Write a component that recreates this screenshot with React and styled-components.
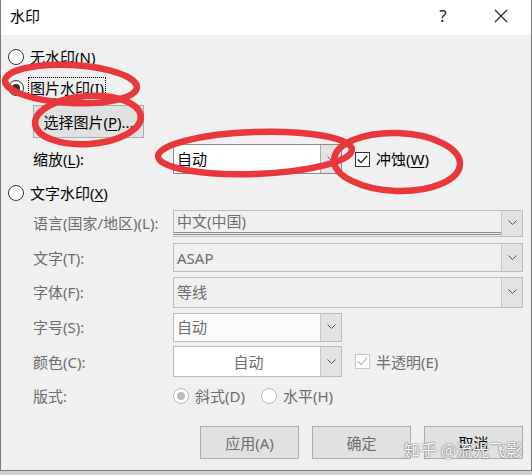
import React from "react";
import styled, { createGlobalStyle } from "styled-components";

const GlobalStyle = createGlobalStyle`
  html, body {
    margin: 0;
    padding: 0;
  }
  body {
    width: 532px;
    height: 475px;
    overflow: hidden;
    background: #d0d0d0;
    font-family: "Noto Sans", "Noto Sans CJK SC", sans-serif;
  }
`;

const Screen = styled.div`
  position: relative;
  width: 532px;
  height: 475px;
`;

const Dialog = styled.div`
  box-sizing: border-box;
  width: 532px;
  height: 471px;
  border: 1px solid #7a7a7a;
  border-top: none;
  background: #f0f0f0;
  display: flex;
  flex-direction: column;
  font-size: 15px;
  line-height: 20px;
  color: #000;
`;

const TitleBar = styled.div`
  height: 35px;
  background: #fff;
  display: flex;
  align-items: center;
  padding: 0 0 3px 9px;
  box-sizing: border-box;
`;

const Title = styled.span`
  flex: 1;
`;

const Help = styled.span`
  width: 14px;
  text-align: center;
  font-size: 17px;
  color: #222;
  margin-right: 44px;
`;

const CloseBox = styled.span`
  display: flex;
  margin-right: 23px;
`;

const Body = styled.div`
  flex: 1;
  padding: 12px 8px 0 7px;
  display: flex;
  flex-direction: column;
`;

const RadioRow = styled.div`
  display: flex;
  align-items: center;
  height: 20px;
  gap: 6px;
  margin-top: ${(p) => p.$mt || 0}px;
  margin-left: ${(p) => p.$ml || 0}px;
  color: ${(p) => (p.$disabled ? "#6d6d6d" : "#000")};
`;

const Radio = styled.span`
  position: relative;
  box-sizing: border-box;
  width: 16px;
  height: 16px;
  border-radius: 50%;
  border: 1px solid ${(p) => (p.$disabled ? "#bcbcbc" : "#333")};
  background: #fff;
  flex: none;
  &::after {
    content: "";
    display: ${(p) => (p.$checked ? "block" : "none")};
    position: absolute;
    left: 3px;
    top: 3px;
    width: 8px;
    height: 8px;
    border-radius: 50%;
    background: ${(p) => (p.$disabled ? "#bcbcbc" : "#333")};
  }
`;

const Focus = styled.span`
  border: 1px dotted #000;
  padding: 0 1px;
  margin-left: -2px;
`;

const U = styled.span`
  text-decoration: underline;
  text-underline-offset: 2px;
`;

const PushButton = styled.div`
  box-sizing: border-box;
  width: ${(p) => p.$w}px;
  height: 33px;
  display: flex;
  align-items: center;
  justify-content: center;
  border: 1px solid #adadad;
  background: #e1e1e1;
  color: ${(p) => (p.$dim ? "#6d6d6d" : "#000")};
  margin-top: ${(p) => p.$mt || 0}px;
  margin-left: ${(p) => p.$ml || 0}px;
`;

const FieldRow = styled.div`
  display: flex;
  align-items: center;
  margin-top: ${(p) => p.$mt || 0}px;
  margin-left: 25px;
`;

const Label = styled.span`
  width: 140px;
  flex: none;
  color: ${(p) => (p.$disabled ? "#6d6d6d" : "#000")};
`;

const FormGrid = styled.div`
  display: grid;
  grid-template-columns: 140px 1fr;
  grid-template-rows: repeat(6, 34.6px);
  align-items: center;
  margin: 3px 0 0 25px;
`;

const Combo = styled.div`
  box-sizing: border-box;
  width: ${(p) => (p.$wide ? 350 : 169)}px;
  height: ${(p) => p.$h || 28}px;
  display: flex;
  border: 1px solid ${(p) => (p.$active ? "#8a8a8a" : "#bcbcbc")};
  background: ${(p) => p.$bg || "#f0f0f0"};
`;

const ComboText = styled.div`
  flex: 1;
  display: flex;
  align-items: center;
  justify-content: ${(p) => (p.$center ? "center" : "flex-start")};
  padding-left: 3px;
  color: ${(p) => (p.$disabled ? "#6d6d6d" : "#000")};
  border-bottom: ${(p) => (p.$double ? "3px double #8c8c8c" : "none")};
  margin-bottom: ${(p) => (p.$double ? "1px" : "0")};
`;

const ComboArrow = styled.div`
  width: 20px;
  flex: none;
  display: flex;
  align-items: center;
  justify-content: center;
  background: #e3e3e3;
  border-left: 1px solid ${(p) => (p.$active ? "#adadad" : "#c8c8c8")};
`;

const Check = styled.span`
  box-sizing: border-box;
  width: 15px;
  height: 15px;
  flex: none;
  display: flex;
  align-items: center;
  justify-content: center;
  border: 1px solid ${(p) => (p.$disabled ? "#c6c6c6" : "#333")};
  background: #fff;
`;

const CheckRow = styled.div`
  display: flex;
  align-items: center;
  gap: 6px;
  margin-left: 13px;
  color: ${(p) => (p.$disabled ? "#6d6d6d" : "#000")};
`;

const Control = styled.div`
  display: flex;
  align-items: center;
`;

const StyleChoices = styled.div`
  display: flex;
  align-items: center;
  gap: 6px;
  color: #6d6d6d;
`;

const ButtonRow = styled.div`
  display: flex;
  justify-content: flex-end;
  gap: 13px;
  margin-top: 12.5px;
`;

const Marks = styled.svg`
  position: absolute;
  left: 0;
  top: 0;
  pointer-events: none;
`;

const Watermark = styled.div`
  position: absolute;
  left: 404px;
  top: 437px;
  font-size: 16px;
  letter-spacing: 0.5px;
  color: #fff;
  text-shadow: 0 0 1px #555, 0 0 2px #777;
  font-family: "Noto Sans CJK SC", sans-serif;
`;

const Chevron = () => (
  <svg width="9" height="6" viewBox="0 0 9 6">
    <polyline points="0.5,0.5 4.5,4.5 8.5,0.5" fill="none" stroke="#555" strokeWidth="1" />
  </svg>
);

const Tick = ({ color }) => (
  <svg width="11" height="9" viewBox="0 0 11 9">
    <polyline points="0.8,4.5 4,7.6 10.2,0.8" fill="none" stroke={color} strokeWidth="1.4" />
  </svg>
);

const Dropdown = ({ text, wide, h, bg, active, disabled, double, center }) => (
  <Combo $wide={wide} $h={h} $bg={bg} $active={active}>
    <ComboText $disabled={disabled} $double={double} $center={center}>
      {text}
    </ComboText>
    <ComboArrow $active={active}>
      <Chevron />
    </ComboArrow>
  </Combo>
);

export default function App() {
  return (
    <Screen>
      <GlobalStyle />
      <Dialog>
        <TitleBar>
          <Title>水印</Title>
          <Help>?</Help>
          <CloseBox>
            <svg width="14" height="14" viewBox="0 0 14 14">
              <path d="M1 1 L13 13 M13 1 L1 13" stroke="#222" strokeWidth="1.1" />
            </svg>
          </CloseBox>
        </TitleBar>
        <Body>
          <RadioRow>
            <Radio />
            <span>
              无水印(<U>N</U>)
            </span>
          </RadioRow>
          <RadioRow $mt={11}>
            <Radio $checked />
            <Focus>
              图片水印(<U>I</U>)
            </Focus>
          </RadioRow>
          <PushButton $w={111} $mt={7} $ml={25}>
            选择图片(<U>P</U>)...
          </PushButton>
          <FieldRow $mt={6}>
            <Label>
              缩放(<U>L</U>):
            </Label>
            <Dropdown text="自动" h={30} bg="#fff" active />
            <CheckRow>
              <Check>
                <Tick color="#222" />
              </Check>
              <span>
                冲蚀(<U>W</U>)
              </span>
            </CheckRow>
          </FieldRow>
          <RadioRow $mt={9}>
            <Radio />
            <span>
              文字水印(<U>X</U>)
            </span>
          </RadioRow>
          <FormGrid>
            <Label $disabled>语言(国家/地区)(L):</Label>
            <Dropdown text="中文(中国)" wide h={27} disabled double />
            <Label $disabled>文字(T):</Label>
            <Dropdown text="ASAP" wide h={29} disabled />
            <Label $disabled>字体(F):</Label>
            <Dropdown text="等线" wide h={31} disabled />
            <Label $disabled>字号(S):</Label>
            <Dropdown text="自动" h={29} bg="#fbfbfb" disabled />
            <Label $disabled>颜色(C):</Label>
            <Control>
              <Dropdown text="自动" h={31} bg="#fff" disabled center />
              <CheckRow $disabled>
                <Check $disabled>
                  <Tick color="#c4c4c4" />
                </Check>
                <span>半透明(E)</span>
              </CheckRow>
            </Control>
            <Label $disabled>版式:</Label>
            <StyleChoices>
              <Radio $checked $disabled />
              <span>斜式(D)</span>
              <Radio $disabled style={{ marginLeft: 10 }} />
              <span>水平(H)</span>
            </StyleChoices>
          </FormGrid>
          <ButtonRow>
            <PushButton $w={99} $dim>
              应用(A)
            </PushButton>
            <PushButton $w={99} $dim>
              确定
            </PushButton>
            <PushButton $w={99}>取消</PushButton>
          </ButtonRow>
        </Body>
      </Dialog>
      <Marks width="532" height="475" viewBox="0 0 532 475">
        <g fill="none" stroke="#e8383b" strokeWidth="6.5">
          <ellipse cx="71" cy="84" rx="66" ry="19" transform="rotate(3 71 84)" />
          <ellipse cx="88" cy="120" rx="53" ry="24" transform="rotate(-4 88 120)" />
          <ellipse cx="255" cy="153" rx="97" ry="21" transform="rotate(-2 255 153)" />
          <ellipse cx="397" cy="162" rx="63" ry="29" transform="rotate(2 397 162)" />
        </g>
      </Marks>
      <Watermark>知乎 @流光飞影</Watermark>
    </Screen>
  );
}
